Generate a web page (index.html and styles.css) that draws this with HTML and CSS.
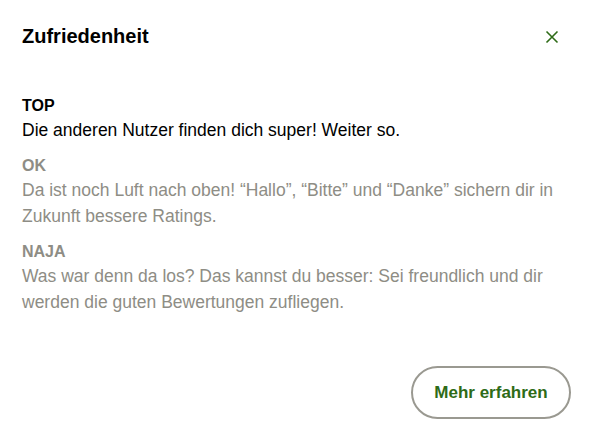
FILE: index.html
```html
<!DOCTYPE html>
<html lang="de">
<head>
<meta charset="utf-8">
<title>Zufriedenheit</title>
<link rel="stylesheet" href="styles.css">
</head>
<body>
<div class="dialog">
  <div class="header">
    <h1 class="title">Zufriedenheit</h1>
    <button class="close" aria-label="Schließen">
      <svg width="14" height="14" viewBox="0 0 14 14"><path d="M1.5 1.5 L12.5 12.5 M12.5 1.5 L1.5 12.5" stroke="#2e6b17" stroke-width="1.6" fill="none"/></svg>
    </button>
  </div>
  <div class="content">
    <div class="section top">
      <div class="label">TOP</div>
      <p class="text">Die anderen Nutzer finden dich super! Weiter so.</p>
    </div>
    <div class="section muted">
      <div class="label">OK</div>
      <p class="text">Da ist noch Luft nach oben! “Hallo”, “Bitte” und “Danke” sichern dir in Zukunft bessere Ratings.</p>
    </div>
    <div class="section muted">
      <div class="label">NAJA</div>
      <p class="text">Was war denn da los? Das kannst du besser: Sei freundlich und dir werden die guten Bewertungen zufliegen.</p>
    </div>
  </div>
  <div class="footer">
    <button class="more">Mehr erfahren</button>
  </div>
</div>
</body>
</html>
```
FILE: styles.css
```css
html, body {
  margin: 0;
  padding: 0;
  background: #ffffff;
}
body {
  font-family: "Liberation Sans", Arial, sans-serif;
  color: #000000;
}
.dialog {
  box-sizing: border-box;
  height: 100vh;
  padding: 25px 18px 20px 22px;
  display: flex;
  flex-direction: column;
}
.header {
  display: flex;
  justify-content: space-between;
  align-items: center;
}
.title {
  margin: 0;
  font-size: 20px;
  line-height: 23px;
  font-weight: 700;
}
.close {
  border: 0;
  background: none;
  padding: 0;
  margin-right: 12px;
  width: 14px;
  height: 14px;
  display: flex;
}
.content {
  margin-top: 47px;
  width: 542px;
}
.section + .section {
  margin-top: 12px;
}
.label {
  font-size: 16px;
  font-weight: 700;
  line-height: 22px;
}
.text {
  margin: 0;
  font-size: 17.5px;
  line-height: 26px;
}
.muted {
  color: #8e8d85;
}
.footer {
  margin-top: auto;
  display: flex;
  justify-content: flex-end;
}
.more {
  box-sizing: border-box;
  width: 160px;
  height: 53px;
  border: 2px solid #9a9991;
  border-radius: 27px;
  background: #ffffff;
  color: #2e6b17;
  font-family: "Liberation Sans", Arial, sans-serif;
  font-size: 17px;
  font-weight: 700;
  padding: 0;
}
```
